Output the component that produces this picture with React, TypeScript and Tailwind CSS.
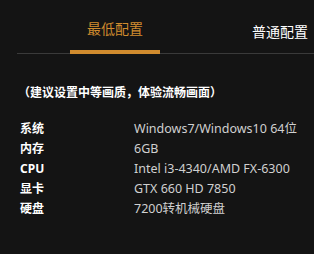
const rows = [
  { label: "系统", value: "Windows7/Windows10 64位" },
  { label: "内存", value: "6GB" },
  { label: "CPU", value: "Intel i3-4340/AMD FX-6300" },
  { label: "显卡", value: "GTX 660 HD 7850" },
  { label: "硬盘", value: "7200转机械硬盘" },
];

export default function App() {
  return (
    <div className="h-[254px] w-[314px] overflow-hidden bg-[#141414] font-['Noto_Sans','Noto_Sans_CJK_SC',sans-serif]">
      <div className="ml-[17px] flex items-end gap-[75px] border-b border-[#3a3a3a] pl-[53px] pt-[21px]">
        <div className="-mb-px w-[90px] shrink-0 border-b-4 border-[#d08b2e] pb-[13px] text-center text-[14px] leading-[16px] text-[#d08b2e]">
          最低配置
        </div>
        <div className="w-[90px] shrink-0 pb-[13px] text-center text-[14px] leading-[16px] text-white">
          普通配置
        </div>
      </div>
      <p className="ml-[18px] mt-[32px] text-[12px] font-bold leading-[14px] text-white">
        （建议设置中等画质，体验流畅画面）
      </p>
      <div className="mt-[19px] flex flex-col">
        {rows.map((r) => (
          <div key={r.label} className="flex h-[20px] items-center">
            <span className="w-[134px] shrink-0 pl-[20px] text-[12px] font-bold text-white">
              {r.label}
            </span>
            <span className="whitespace-nowrap text-[12.5px] text-[#d0d0d0]">{r.value}</span>
          </div>
        ))}
      </div>
    </div>
  );
}
